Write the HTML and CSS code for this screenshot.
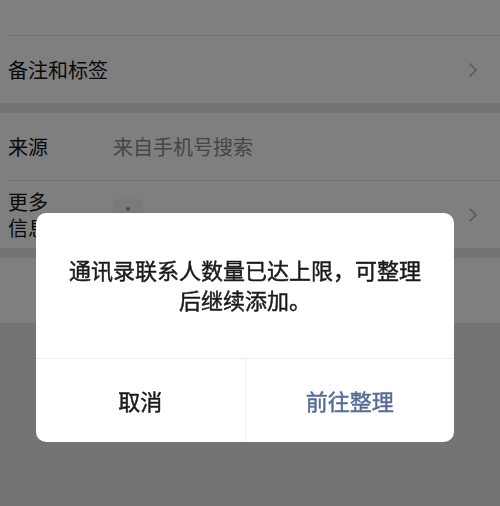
FILE: index.html
```html
<!DOCTYPE html>
<html lang="zh-CN">
<head>
<meta charset="utf-8">
<title>联系人</title>
<link rel="stylesheet" href="styles.css">
</head>
<body>
<div class="page">
  <div class="group">
    <div class="cell cell-top"></div>
    <div class="cell">
      <span class="label">备注和标签</span>
      <span class="value"></span>
      <svg class="chev" width="10" height="16" viewBox="0 0 10 16"><polyline points="1.5,1.5 8,8 1.5,14.5" fill="none" stroke="#b2b2b2" stroke-width="1.6"/></svg>
    </div>
  </div>
  <div class="group">
    <div class="cell">
      <span class="label">来源</span>
      <span class="value muted">来自手机号搜索</span>
    </div>
    <div class="cell">
      <span class="label two">更多<br>信息</span>
      <span class="value"><span class="thumb"><span class="dot"></span></span></span>
      <svg class="chev" width="10" height="16" viewBox="0 0 10 16"><polyline points="1.5,1.5 8,8 1.5,14.5" fill="none" stroke="#b2b2b2" stroke-width="1.6"/></svg>
    </div>
  </div>
  <div class="group">
    <div class="cell cell-blank"></div>
  </div>
</div>

<div class="mask">
  <div class="dialog">
    <div class="dialog-body">通讯录联系人数量已达上限，可整理<br>后继续添加。</div>
    <div class="dialog-actions">
      <div class="btn">取消</div>
      <div class="btn primary">前往整理</div>
    </div>
  </div>
</div>
</body>
</html>
```

FILE: styles.css
```css
* { box-sizing: border-box; }
html, body { margin: 0; padding: 0; }
body {
  background: #e8e8e8;
  font-family: "Noto Sans CJK SC", "Noto Sans", sans-serif;
  color: #111;
  width: 500px;
  height: 506px;
  overflow: hidden;
}
.page {
  display: flex;
  flex-direction: column;
  gap: 10px;
}
.group {
  background: #fff;
}
.cell {
  margin-left: 8px;
  padding-right: 22px;
  height: 67px;
  display: flex;
  align-items: center;
  font-size: 20px;
}
.cell + .cell {
  border-top: 1px solid #e6e6e6;
  height: 68px;
}
.cell-top { height: 35px; }
.cell-blank { height: 65px; }
.label {
  width: 105px;
  flex: none;
  line-height: 26px;
}
.value {
  flex: 1;
  display: flex;
  align-items: center;
}
.muted { color: #8a8a8a; }
.thumb {
  width: 30px;
  height: 30px;
  background: #f4f4f4;
  border-radius: 3px;
  display: flex;
  align-items: center;
  justify-content: center;
  margin-top: -1px;
}
.dot {
  width: 4px;
  height: 4px;
  border-radius: 50%;
  background: #999;
  margin-top: -10px;
}
.chev { flex: none; }

.mask {
  position: fixed;
  inset: 0;
  background: rgba(0, 0, 0, 0.5);
}
.dialog {
  position: absolute;
  left: 36px;
  top: 213px;
  width: 418px;
  height: 229px;
  background: #fff;
  border-radius: 10px;
  display: flex;
  flex-direction: column;
  overflow: hidden;
}
.dialog-body {
  height: 146px;
  display: flex;
  align-items: center;
  justify-content: center;
  text-align: center;
  padding: 0 20px 4px;
  font-size: 22px;
  line-height: 30px;
  font-weight: 400;
  -webkit-text-stroke: 0.45px #1a1a1a;
  color: #1a1a1a;
  border-bottom: 1px solid #ededed;
}
.dialog-actions {
  flex: 1;
  display: flex;
}
.btn {
  flex: 1;
  display: flex;
  align-items: center;
  justify-content: center;
  font-size: 22px;
  font-weight: 400;
  -webkit-text-stroke: 0.45px currentColor;
  color: #1a1a1a;
  padding-bottom: 2px;
}
.btn + .btn { border-left: 1px solid #ededed; }
.btn.primary { color: #576b95; }
```
